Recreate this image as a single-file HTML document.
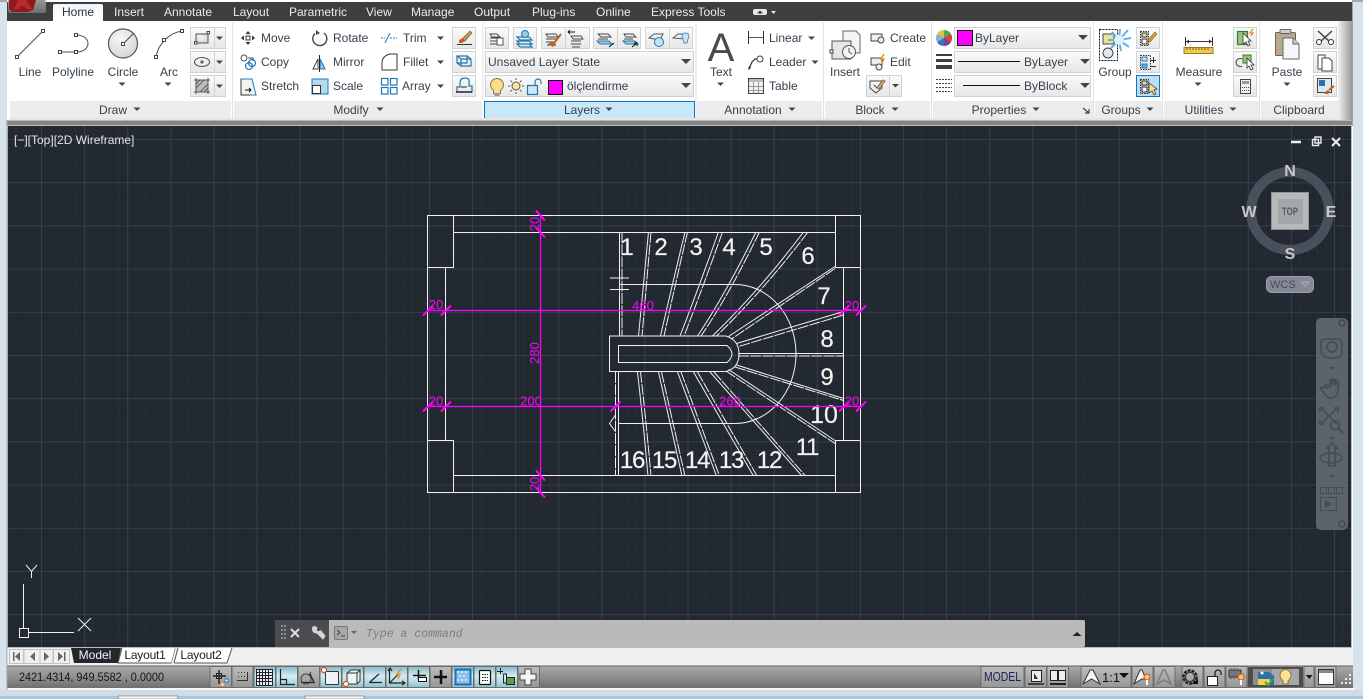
<!DOCTYPE html>
<html><head><meta charset="utf-8"><title>AutoCAD</title>
<style>
html,body{margin:0;padding:0;width:1363px;height:699px;overflow:hidden;background:#d6e2ec}
svg{display:block;font-family:"Liberation Sans",sans-serif;font-size:12px}
.t{fill:#36414d}
.c{fill:#36414d;text-anchor:middle}
.tab{fill:#ececec}
.m{fill:#ff00ff;font-size:13px;text-anchor:middle}
.n{fill:#f2f2f2;font-size:24px;text-anchor:middle;stroke:#f2f2f2;stroke-width:.2}
.n2{letter-spacing:-1.200px}
.ic{fill:none;stroke:#4a4f55;stroke-width:1}
.bl{fill:none;stroke:#1f78b4;stroke-width:1.2}
.sq{fill:#fff;stroke:#444;stroke-width:1}
.w{fill:none;stroke:#f0f0f0;stroke-width:1}
.d{fill:none;stroke:#f0f0f0;stroke-width:1;stroke-dasharray:11 1.2}
.tk{stroke:#ff00ff;stroke-width:2}
.nv{fill:none;stroke:#454b52;stroke-width:1.5}
.s{fill:none;stroke:#222;stroke-width:1.2}
</style></head><body>
<svg width="1363" height="699" viewBox="0 0 1363 699" xmlns="http://www.w3.org/2000/svg">
<defs>
<linearGradient id="gb" x1="0" y1="0" x2="0" y2="1"><stop offset="0" stop-color="#fbfbfb"/><stop offset="1" stop-color="#e6e6e6"/></linearGradient>
<linearGradient id="gh" x1="0" y1="0" x2="0" y2="1"><stop offset="0" stop-color="#f2f6f8"/><stop offset="1" stop-color="#ffffff"/></linearGradient>
<linearGradient id="gs" x1="0" y1="0" x2="0" y2="1"><stop offset="0" stop-color="#a9a9a9"/><stop offset=".5" stop-color="#8f8f8f"/><stop offset="1" stop-color="#6f6f6f"/></linearGradient>
<linearGradient id="gg" x1="0" y1="0" x2="0" y2="1"><stop offset="0" stop-color="#bdbdbd"/><stop offset="1" stop-color="#969696"/></linearGradient>
<linearGradient id="gt" x1="0" y1="0" x2="0" y2="1"><stop offset="0" stop-color="#82b9ca"/><stop offset=".45" stop-color="#d5ebf1"/><stop offset=".75" stop-color="#b2d8e3"/><stop offset="1" stop-color="#8ac1d0"/></linearGradient>
<linearGradient id="gr" x1="0" y1="0" x2="1" y2="0"><stop offset="0" stop-color="#f0f0f0"/><stop offset="1" stop-color="#9a9a9a"/></linearGradient>
<linearGradient id="gd" x1="0" y1="0" x2="0" y2="1"><stop offset="0" stop-color="#9a9a9a"/><stop offset="1" stop-color="#6c6c6c"/></linearGradient>
<radialGradient id="gc" cx=".4" cy=".35" r=".8"><stop offset="0" stop-color="#f7f7f7"/><stop offset="1" stop-color="#cfcfcf"/></radialGradient>
<pattern id="minor" x="41" y="139" width="8.62" height="8.64" patternUnits="userSpaceOnUse"><rect width="1" height="8.64" fill="#262d36"/><rect width="8.62" height="1" fill="#262d36"/></pattern>
<pattern id="major" x="41" y="139" width="43.1" height="43.2" patternUnits="userSpaceOnUse"><rect width="1" height="43.2" fill="#363d4b"/><rect width="43.1" height="1" fill="#363d4b"/></pattern>
<path id="ar" d="M-3.5-1.5h7l-3.5 3.5z" fill="#3f4650"/>
<path id="ard" d="M-5-2h10l-5 5z" fill="#3f4650"/>
</defs>

<!-- frame -->
<rect width="1363" height="699" fill="#d6e2ec"/>
<rect x="0" y="0" width="1363" height="2" fill="#a8a8a8"/>
<rect x="7" y="0" width="1346" height="690" fill="#fff"/>
<rect x="7" y="2" width="1345" height="19" fill="#3e3e3e"/>

<!-- app button -->
<rect x="8" y="0" width="38" height="13" rx="2" fill="url(#gd)"/>
<path d="M9 0h27l-3 10-6 2H12l-3-3z" fill="#8e1a1c"/>
<path d="M18 0l-4 9h5l1-3h4l3 3h5L26 0z" fill="#b82a2e"/>

<!-- tabs -->
<path d="M53 21V6q0-2 2-2h46q2 0 2 2v15z" fill="url(#gh)"/>
<text x="62" y="16" fill="#2b3540">Home</text>
<g class="tab">
<text x="114" y="16">Insert</text><text x="164" y="16">Annotate</text><text x="233" y="16">Layout</text>
<text x="289" y="16">Parametric</text><text x="366" y="16">View</text><text x="411" y="16">Manage</text>
<text x="474" y="16">Output</text><text x="532" y="16">Plug-ins</text><text x="596" y="16">Online</text><text x="651" y="16">Express Tools</text>
</g>
<rect x="753" y="9" width="14" height="6" rx="2" fill="#e8e8e8"/><path d="M757 13.500l3-3 3 3z" fill="#333"/>
<path d="M771 11h5l-2.500 3z" fill="#e8e8e8"/>

<!-- ribbon bottom and scroll area -->
<rect x="9" y="21" width="1329" height="99" fill="#fff"/>
<rect x="1338" y="21" width="14" height="99" fill="url(#gr)"/>
<rect x="7" y="120" width="1345" height="6" fill="#858585"/>
<rect x="7" y="120" width="1345" height="1" fill="#b5b5b5"/>

<!-- panel title strips -->
<g fill="#ececec">
<rect x="10" y="101" width="221" height="18"/><rect x="234" y="101" width="248" height="18"/>
<rect x="697" y="101" width="125" height="18"/><rect x="825" y="101" width="105" height="18"/>
<rect x="933" y="101" width="160" height="18"/><rect x="1095" y="101" width="67" height="18"/>
<rect x="1164" y="101" width="95" height="18"/><rect x="1261" y="101" width="77" height="18"/>
</g>
<rect x="484.500" y="101.500" width="210" height="17" fill="#c9e8f7" stroke="#1173c4"/>
<g stroke="#e2e2e2"><path d="M232.500 22v98M483 22v78M696 22v98M823.500 22v98M931.500 22v98M1093.500 22v98M1162.500 22v98M1259.500 22v98"/></g>
<rect x="9" y="118" width="1329" height="2" fill="#e5e5e5"/>

<!-- titles -->
<g class="c">
<text x="113" y="114">Draw</text><text x="351" y="114">Modify</text><text x="582" y="114">Layers</text>
<text x="753" y="114">Annotation</text><text x="870" y="114">Block</text><text x="999" y="114">Properties</text>
<text x="1121" y="114">Groups</text><text x="1204" y="114">Utilities</text><text x="1299" y="114">Clipboard</text>
</g>
<use href="#ar" x="137" y="109"/><use href="#ar" x="380" y="109"/><use href="#ar" x="609" y="109"/><use href="#ar" x="792" y="109"/>
<use href="#ar" x="895" y="109"/><use href="#ar" x="1036" y="109"/><use href="#ar" x="1150" y="109"/><use href="#ar" x="1233" y="109"/>
<path d="M1083 108l6 5M1089 109v4h-4" fill="none" stroke="#444" stroke-width="1.200"/>

<!-- DRAW -->
<g class="ic">
<path d="M17 57L43 31"/><rect class="sq" x="15.500" y="55.500" width="3" height="3"/><rect class="sq" x="41.500" y="29.500" width="3" height="3"/>
<path d="M60 52H76M76 35C92 35 92 52 76 52"/><rect class="sq" x="58.500" y="50.500" width="3" height="3"/><rect class="sq" x="74.500" y="50.500" width="3" height="3"/><rect class="sq" x="74.500" y="33.500" width="3" height="3"/>
<circle cx="123" cy="43.500" r="14.500" fill="url(#gc)" stroke="#555" stroke-width="1.200"/><path d="M123 44L134 33"/><rect class="sq" x="121.500" y="42.500" width="3" height="3"/>
<path d="M156 57C158 45 168 33 182 31"/><rect class="sq" x="154.500" y="55.500" width="3" height="3"/><rect class="sq" x="162.500" y="38.500" width="3" height="3"/><rect class="sq" x="180.500" y="29.500" width="3" height="3"/>
</g>
<g class="c"><text x="30" y="76">Line</text><text x="73" y="76">Polyline</text><text x="123" y="76">Circle</text><text x="169" y="76">Arc</text></g>
<use href="#ar" x="122" y="84"/><use href="#ar" x="168" y="84"/>
<g fill="url(#gb)" stroke="#d2d2d2">
<rect x="190.500" y="27.500" width="35" height="21"/><rect x="190.500" y="51.500" width="35" height="21"/><rect x="190.500" y="75.500" width="35" height="21"/>
<path d="M214.500 28v21M214.500 52v21M214.500 76v21" fill="none"/>
</g>
<use href="#ar" x="219.500" y="38"/><use href="#ar" x="219.500" y="62"/><use href="#ar" x="219.500" y="86"/>
<path d="M196 34h12v9h-12z" fill="url(#gc)" stroke="#555"/><rect class="sq" x="194.500" y="41.500" width="2.500" height="2.500"/><rect class="sq" x="207" y="31.500" width="2.500" height="2.500"/>
<ellipse cx="202" cy="62" rx="7.500" ry="4.500" class="ic"/><path d="M200 62h4M202 60v4" stroke="#444"/><path d="M194 62h1M209 62h1" stroke="#444"/>
<rect x="196" y="80" width="12" height="12" fill="#bbb" stroke="#555"/><path d="M196 88l8-8M196 84l4-4M200 92l8-8M204 92l4-4" stroke="#666"/><path d="M194 80h16M196 78v16M194 92h16M208 78v16" stroke="#555" fill="none"/>

<!-- MODIFY -->
<g class="t"><text x="261" y="42">Move</text><text x="261" y="66">Copy</text><text x="261" y="90">Stretch</text>
<text x="333" y="42">Rotate</text><text x="333" y="66">Mirror</text><text x="333" y="90">Scale</text>
<text x="403" y="42">Trim</text><text x="403" y="66">Fillet</text><text x="402" y="90">Array</text></g>
<use href="#ar" x="440.500" y="38"/><use href="#ar" x="440.500" y="62"/><use href="#ar" x="440.500" y="86"/>
<path d="M248 31l-2.500 3h5zM248 45l-2.500-3h5zM241 38l3-2.500v5zM255 38l-3-2.500v5z" fill="#333"/><rect x="246" y="36" width="4" height="4" fill="#fff" stroke="#333"/>
<path d="M324 33a7 7 0 1 1-9 .5" fill="none" stroke="#444" stroke-width="1.400"/><path d="M316 30l4 3-4 2z" fill="#444"/>
<circle cx="244" cy="58" r="3" class="ic"/><path d="M248 58h5v3" class="ic"/><circle cx="249" cy="66" r="3.500" class="bl"/><circle cx="252" cy="63" r="3.500" class="bl"/>
<path d="M313 69l5-10v10zM325 69l-5-10v10z" fill="none" stroke="#444"/><path d="M325 69l-5-10v10z" fill="#9fc6e2" stroke="#1f78b4"/><path d="M319.500 55v17" stroke="#222"/>
<path d="M241 79h11l4 16h-15z" fill="#f3f3f3" stroke="#1f78b4"/><path d="M241 79v16h9" fill="none" stroke="#333"/><path d="M245 90h6m-2-2l2 2-2 2" fill="none" stroke="#111"/>
<rect x="312" y="79" width="16" height="15" fill="#b7d9f0" stroke="#1f78b4"/><rect x="312.500" y="85.500" width="8" height="8" fill="#fff" stroke="#333"/>
<path d="M381 38h4M390 38h7" stroke="#1f78b4" stroke-dasharray="2 1"/><path d="M385 43l5-10" stroke="#1f78b4"/>
<path d="M382 70h15V54h-7q-8 2-8 9z" fill="none" stroke="#333"/>
<g class="bl"><rect x="381.500" y="78.500" width="6.500" height="6.500"/><rect x="390.500" y="78.500" width="6.500" height="6.500"/><rect x="381.500" y="87.500" width="6.500" height="6.500"/><rect x="390.500" y="87.500" width="6.500" height="6.500"/></g>
<g fill="url(#gb)" stroke="#d2d2d2"><rect x="452.500" y="27.500" width="23" height="21"/><rect x="452.500" y="51.500" width="23" height="21"/><rect x="452.500" y="75.500" width="23" height="21"/></g>
<path d="M457 44.500h15" stroke="#333"/><path d="M470 31l2 2-7 8-3-2z" fill="#b99a5e" stroke="#7d6a3e" stroke-width=".7"/><path d="M459 40l4-2 2 3-3 2h-3z" fill="#d9531e"/>
<path d="M457 56h10l4 3v7h-10l-4-3z" class="bl"/><path d="M461 59h10M461 59v7M457 56l4 3M467 56v7h-10" class="bl" stroke-width=".8"/>
<path d="M457 92v-5h3v-4q0-5 5-5t4 5v3h3v6z" fill="none" stroke="#1f78b4" stroke-width="1.200"/><path d="M456 92h16" stroke="#222" stroke-width="1.400"/><path d="M461 87h6" stroke="#222"/>

<!-- LAYERS -->
<g fill="url(#gb)" stroke="#d2d2d2">
<rect x="485.500" y="27.500" width="23" height="21"/><rect x="513.500" y="27.500" width="23" height="21"/>
<rect x="541.500" y="27.500" width="48" height="21"/><rect x="593.500" y="27.500" width="47" height="21"/><rect x="645.500" y="27.500" width="47" height="21"/>
<path d="M565.500 28v21M617.500 28v21M669.500 28v21" fill="none"/>
<rect x="485.500" y="51.500" width="208" height="21"/><rect x="485.500" y="75.500" width="208" height="21"/>
</g>
<g fill="none" stroke="#444" stroke-width=".9">
<path d="M490 34h7l3 3h-8zM490 38h10M490 41h10M490 44h7"/><rect x="497" y="38" width="6" height="7" fill="#fff"/>
<path d="M546 34h10l2 3h-10zM546 39h10M546 42h10M547 45h9"/>
<path d="M571 36h10l2 3h-10zM571 41h10M571 44h10M572 47h8"/><path d="M570 30l-2 2 2 2M568 32h7" stroke="#111"/>
<path d="M598 34h10l3 3h-10zM598 39h10"/><path d="M624 34h9l3 3h-10zM624 39h9"/>
</g>
<path d="M517 37h12l3 3h-12zM517 41h12l3 3h-12zM517 44h12l3 3h-12z" class="bl"/><circle cx="525" cy="34" r="3.500" fill="#9fc6e2" stroke="#1f78b4"/>
<path d="M548 44l5-3 3 3-3 3z" fill="#b5661e"/><path d="M555 42l6-8" stroke="#b5661e" stroke-width="2"/>
<path d="M597 41h12l3 3h-12z" fill="#9fc6e2" stroke="#1f78b4"/><path d="M609 47l5-4" stroke="#111"/><path d="M623 41h12l3 3h-12z" fill="#9fc6e2" stroke="#1f78b4"/><path d="M632 47l5-4m-3 0h3v3" fill="none" stroke="#111"/>
<path d="M649 38l5-4h9l-3 6z" fill="none" stroke="#555"/><circle cx="659" cy="42" r="4.500" fill="#c7e0f2" stroke="#1f78b4"/>
<path d="M673 38l5-4h10l-3 5z" fill="none" stroke="#555"/><path d="M683 39a3.500 3.500 0 1 1 5 0l-1 4h-3z" fill="#cfe4f4" stroke="#5b8db0"/>
<text x="488" y="66" class="t">Unsaved Layer State</text>
<use href="#ard" x="686" y="61"/><use href="#ard" x="686" y="85"/>
<path d="M493.500 90.500q-3-3-3-5.500a6.500 6.500 0 0 1 13 0q0 2.500-3 5.500v3h-7z" fill="#f8df88" stroke="#8a7a3a"/><rect x="494.500" y="93" width="5" height="3" fill="#999"/>
<circle cx="516" cy="86" r="4" fill="#f6e59a" stroke="#555"/><path d="M510 86h-2M524 86h-2M516 80v-2M516 94v-2M512 82l-1.500-1.500M521.500 91.500L520 90M520 82l1.500-1.500M510.500 91.500L512 90" stroke="#555"/>
<rect x="527.500" y="85.500" width="10" height="9" fill="#cfe6f6" stroke="#1f78b4" stroke-width="1.200"/><path d="M535 85v-3a3 3 0 0 1 6 0v2" fill="none" stroke="#1f78b4" stroke-width="1.200"/>
<rect x="548.500" y="80.500" width="14" height="14" fill="#ff00ff" stroke="#111"/>
<text x="567" y="90" class="t">ölçlendirme</text>

<!-- ANNOTATION -->
<text x="721" y="61" text-anchor="middle" style="font-size:40px" fill="#474b50">A</text>
<text x="721" y="76" class="c">Text</text><use href="#ar" x="720.500" y="84"/>
<g class="t"><text x="769" y="42">Linear</text><text x="769" y="66">Leader</text><text x="769" y="90">Table</text></g>
<use href="#ar" x="811.500" y="38"/><use href="#ar" x="815" y="62"/>
<path d="M748.500 31v13M763.500 31v13" stroke="#333"/><path d="M749 37.500h14" stroke="#555"/>
<path d="M749 69l3-7 3-3h4" fill="none" stroke="#333" stroke-width="1.200"/><circle cx="760" cy="59" r="3" fill="#fff" stroke="#444"/><path d="M748 70l1-4 2 2z" fill="#222"/>
<rect x="748.500" y="78.500" width="15" height="15" fill="#f3f3f3" stroke="#444"/><rect x="749" y="79" width="14" height="3" fill="#bbb"/><path d="M749 86.500h14M749 90.500h14M753.500 82v11M758.500 82v11" stroke="#999"/>

<!-- BLOCK -->
<path d="M843 31h13l4 4v18h-17z" fill="#f5f5f5" stroke="#666"/>
<path d="M832 41h19v18h-19z" fill="#e6e6e6" stroke="#555"/>
<circle cx="849" cy="52" r="6.500" fill="#f4f4f4" stroke="#555"/><path d="M849 48v4l3 2" fill="none" stroke="#555"/>
<rect class="sq" x="830" y="50" width="3" height="3"/>
<text x="845" y="76" class="c">Insert</text>
<g class="t"><text x="890" y="42">Create</text><text x="890" y="66">Edit</text></g>
<rect x="871" y="34" width="11" height="7" fill="#eee" stroke="#444"/><circle cx="881" cy="40" r="3" fill="#eee" stroke="#444"/>
<rect x="871" y="58" width="11" height="7" fill="#eee" stroke="#444"/><circle cx="879" cy="67" r="3" fill="#eee" stroke="#444"/><path d="M884 54l-3 5h3l-2 4" fill="none" stroke="#e8931e" stroke-width="1.400"/>
<g fill="url(#gb)" stroke="#d2d2d2"><rect x="866.500" y="75.500" width="35" height="21"/><path d="M889.500 76v21" fill="none"/></g>
<use href="#ar" x="895.500" y="85.500"/>
<path d="M870 81h12v7l-6 5-6-5z" fill="none" stroke="#444"/><path d="M874 85l3 3 5-7" stroke="#444" fill="none"/><path d="M877 88l6-8 2 1-6 8z" fill="#f0c040" stroke="#866"/>

<!-- PROPERTIES -->
<circle cx="944" cy="38" r="7.500" fill="#999"/><path d="M944 38L937 34a8 8 0 0 1 7-4z" fill="#e3c53c"/><path d="M944 38V30a8 8 0 0 1 7 4z" fill="#53a84c"/><path d="M944 38l7-4a8 8 0 0 1 0 8z" fill="#d6433a"/><path d="M944 38l7 4a8 8 0 0 1-7 4z" fill="#7b3f9d"/><path d="M944 38v8a8 8 0 0 1-7-4z" fill="#3f6fc0"/><path d="M944 38l-7 4a8 8 0 0 1 0-8z" fill="#7fb8dd"/>
<g fill="#3d4046"><rect x="936" y="54" width="16" height="2"/><rect x="936" y="59" width="16" height="3"/><rect x="936" y="65" width="16" height="4"/></g>
<g stroke="#444" stroke-dasharray="2 1"><path d="M936 79.500h16M936 83.500h16M936 87.500h16M936 91.500h16"/></g>
<g fill="url(#gb)" stroke="#d2d2d2"><rect x="954.500" y="27.500" width="136" height="21"/><rect x="954.500" y="51.500" width="136" height="21"/><rect x="954.500" y="75.500" width="136" height="21"/></g>
<rect x="957.500" y="30.500" width="15" height="15" fill="#ff00ff" stroke="#111"/>
<g class="t"><text x="975" y="42">ByLayer</text><text x="1024" y="66">ByLayer</text><text x="1024" y="90">ByBlock</text></g>
<path d="M958 61.500h62M963 85.500h57" stroke="#111"/>
<use href="#ard" x="1083" y="37"/><use href="#ard" x="1085" y="61"/><use href="#ard" x="1085" y="85"/>

<!-- GROUPS -->
<rect x="1099.500" y="29.500" width="18" height="31" fill="none" stroke="#111" stroke-dasharray="2 1"/>
<rect x="1103" y="34" width="11" height="10" fill="#e8e49a" stroke="#444"/><circle cx="1108" cy="53" r="5" fill="#dfe8ee" stroke="#444"/>
<path d="M1119 40L1131 38M1119 40L1128 30M1119 40L1120 29M1119 40L1112 32M1119 40L1108 40M1119 40L1111 48M1119 40L1121 51M1119 40L1129 47" stroke="#5fb2ea" stroke-width="2"/><circle cx="1119" cy="40" r="5" fill="#dff1fc"/>
<text x="1115" y="76" class="c">Group</text>
<g fill="url(#gb)" stroke="#d2d2d2"><rect x="1136.500" y="27.500" width="23" height="21"/><rect x="1136.500" y="51.500" width="23" height="21"/></g>
<rect x="1136.500" y="75.500" width="23" height="21" fill="#bcdcf4" stroke="#1173c4"/>
<g fill="none" stroke="#333" stroke-dasharray="1.500 1"><rect x="1140.500" y="31.500" width="8" height="14"/><rect x="1140.500" y="55.500" width="10" height="14"/><rect x="1140.500" y="79.500" width="8" height="14"/></g>
<rect x="1142" y="33" width="5" height="4" fill="#e8e49a" stroke="#333"/><rect x="1142" y="39" width="5" height="5" fill="#fff" stroke="#333"/>
<path d="M1148 40l7-8 2 2-7 8z" fill="#e39a3c" stroke="#7d6a3e" stroke-width=".6"/>
<rect x="1142" y="57" width="5" height="4" fill="#cfe4f4" stroke="#1f78b4"/><rect x="1142" y="64" width="5" height="4" fill="#6fa8d8" stroke="#1f78b4"/><path d="M1150 60.500h6M1153.500 57v6M1150 66.500h6" stroke="#333"/>
<rect x="1142" y="81" width="5" height="4" fill="#e8e49a" stroke="#333"/><rect x="1142" y="87" width="5" height="5" fill="#fff" stroke="#333"/><path d="M1149 83l8 6-3 1 2 4-2 1-2-4-3 2z" fill="#f3e48a" stroke="#333" stroke-width=".7"/>

<!-- UTILITIES -->
<path d="M1185.500 37v9M1212.500 37v9" stroke="#333"/><path d="M1186 41.500h26" stroke="#333"/><path d="M1186 41.500l3-2v4zM1212 41.500l-3-2v4z" fill="#333"/>
<rect x="1184" y="47.500" width="29" height="6" fill="#eec84f" stroke="#9c7a1e"/><path d="M1187 48v2M1190 48v2M1193 48v2M1196 48v2M1199 48v2M1202 48v2M1205 48v2M1208 48v2" stroke="#7d6015"/>
<text x="1199" y="76" class="c">Measure</text><use href="#ar" x="1198" y="84"/>
<g fill="url(#gb)" stroke="#d2d2d2"><rect x="1233.500" y="27.500" width="23" height="21"/><rect x="1233.500" y="51.500" width="23" height="21"/><rect x="1233.500" y="75.500" width="23" height="21"/></g>
<rect x="1237.500" y="31.500" width="10" height="13" fill="#9bc27e" stroke="#2e7d32" stroke-width="1.200"/><path d="M1243 33l8 8-3 0 2 4-2 1-2-4-3 2z" fill="#fff" stroke="#333" stroke-width=".8"/><path d="M1253 29l-3 4h3l-2 3" fill="none" stroke="#e8931e" stroke-width="1.300"/>
<rect x="1243" y="55" width="8" height="8" fill="#9bc27e" stroke="#2e7d32"/><path d="M1242 59a4 4 0 1 0 0 7" fill="none" stroke="#444"/><path d="M1247 58l7 7-3 0 2 4-2 1-2-4-2 2z" fill="#fff" stroke="#333" stroke-width=".8"/>
<rect x="1240.500" y="79.500" width="10" height="14" fill="#f2f2f2" stroke="#444"/><rect x="1242" y="81" width="7" height="3" fill="#999"/><path d="M1242 87.500h7M1242 90.500h7" stroke="#444" stroke-dasharray="1 1"/>

<!-- CLIPBOARD -->
<rect x="1275.500" y="32.500" width="20" height="23" rx="1" fill="#b8a98c" stroke="#6f6552"/>
<rect x="1280" y="29.500" width="11" height="4" rx="1" fill="#ccc" stroke="#666"/>
<path d="M1283 38h10l6 6v15h-16z" fill="#f5f6f8" stroke="#666"/><path d="M1293 38v6h6" fill="#ccc" stroke="#666"/>
<text x="1287" y="76" class="c">Paste</text><use href="#ar" x="1287" y="84"/>
<g fill="url(#gb)" stroke="#d2d2d2"><rect x="1313.500" y="27.500" width="23" height="21"/><rect x="1313.500" y="51.500" width="23" height="21"/><rect x="1313.500" y="75.500" width="23" height="21"/></g>
<path d="M1318 31l12 11M1332 31l-12 11" stroke="#444" stroke-width="1.500"/><circle cx="1319" cy="42" r="2.500" fill="#fff" stroke="#333"/><circle cx="1331" cy="42" r="2.500" fill="#fff" stroke="#333"/>
<path d="M1318 55h7v14h-7z" fill="#fff" stroke="#444"/><path d="M1322 58h7l3 3v10h-10z" fill="#fff" stroke="#444"/>
<rect x="1317.500" y="78.500" width="14" height="14" fill="#dde7ef" stroke="#444"/><rect x="1319" y="80" width="6" height="6" fill="#2f6ea8"/><path d="M1325 92l3-2 2 2-2 2h-3z" fill="#b5661e"/><path d="M1329 90l5-4" stroke="#b5661e" stroke-width="2"/>

<!-- VIEWPORT -->
<rect x="8" y="126" width="1343" height="521" fill="#212830"/>
<rect x="8" y="126" width="1343" height="521" fill="url(#minor)"/>
<rect x="8" y="126" width="1343" height="521" fill="url(#major)"/>
<rect x="7.500" y="125.500" width="1344" height="522" fill="none" stroke="#bdbdbd"/>
<text x="14" y="144" fill="#e4e4e4">[−][Top][2D Wireframe]</text>
<path d="M1291 142h10" stroke="#eee" stroke-width="2.500"/>
<rect x="1312.500" y="139.500" width="6" height="6" fill="none" stroke="#eee" stroke-width="1.400"/><rect x="1315" y="137" width="6" height="6" fill="none" stroke="#eee" stroke-width="1.400"/>
<path d="M1332 138l8 8M1340 138l-8 8" stroke="#eee" stroke-width="2"/>

<!-- DRAWING -->
<g class="w">
<rect x="427.500" y="215.500" width="433" height="277"/>
<path d="M453.500 215.500V267.500H427.500M835.500 215.500V267.500H860.500M453.500 232.500H835.500M445.500 267.500V440.500M843.500 267.500V440.500"/>
<path d="M427.500 440.500H453.500V492.500M860.500 440.500H835.500V492.500M453.500 475.500H835.500"/>
<path d="M609.500 336H726Q739 340 739 354Q739 368 726 371.500H609.500Z"/>
<path d="M618.500 345.500H727Q732 350 732 354Q732 358 727 362.500H618.500Z"/>
<path d="M619.500 232V336M618.500 372V475"/>
<path d="M619 284.500H735A61 69.500 0 0 1 735 423.500H618.500"/>
<path d="M610 278H629M610 289.500H629"/>
<path d="M615.500 415L609.500 423.500L615.500 431.500"/>
<!-- upper risers -->
<path d="M648.500 232Q643 290 638.500 336M685 232Q671 290 660.500 336M718.500 232Q696 295 680 336M756 232Q725 295 697.500 336M803.500 232Q760 290 712.500 336"/>
<path d="M835 266.500L728.500 336.500M843.500 311.500L736.500 343.500M738 353.500H843.500"/>
<path d="M736.500 365L843.500 398.500M728.500 369.500L835 440.500M710 372L802 476M693.500 372L753.500 476M677.500 372L716.500 476M658.500 372L682 476M637.500 372Q643 420 648 476"/>
</g>
<g class="d">
<path d="M622 232V336M615.500 372V475"/>
<path d="M651 232Q646 290 642 336M687.500 232Q674 290 664 336M722.500 232Q700 295 684 336M759.500 232Q729 295 701 336M808 232Q764 290 716.500 336"/>
<path d="M835 268.500L731.500 339M843.500 315L738.500 346.500M738 356H843.500"/>
<path d="M735 367L843.500 400.500M726 371L835 443.500M714 372L805.500 476M697.500 372L757 476M681 372L719.500 476M661.500 372L685 476M640.500 372Q646 420 651 476"/>
</g>
<g class="n">
<text x="627" y="255">1</text><text x="661" y="255">2</text><text x="696" y="255">3</text><text x="729" y="255">4</text><text x="766" y="255">5</text>
<text x="808" y="264">6</text><text x="824" y="304">7</text><text x="827" y="347">8</text><text x="827" y="385">9</text>
<text x="824" y="423" style="font-size:25px">10</text><text x="807" y="455" class="n2">11</text>
<text x="769" y="468" class="n2">12</text><text x="731" y="468" class="n2">13</text><text x="697" y="468" class="n2">14</text><text x="664" y="468" class="n2">15</text><text x="632" y="468" class="n2">16</text>
</g>
<!-- dimensions -->
<g stroke="#ff00ff" stroke-width="1.200"><path d="M427 310.500H861M427 406.500H861M540.500 215V492"/></g>
<g class="tk">
<path d="M423 315.500l10-10M441 315.500l10-10M839 315.500l10-10M856 315.500l10-10"/>
<path d="M423 411.500l10-10M441 411.500l10-10M610.500 411.500l10-10M839 411.500l10-10M856 411.500l10-10"/>
<path d="M536 210.500l9 10M536 227.500l9 10M536 470.500l9 10M536 487.500l9 10"/>
</g>
<g class="m">
<text x="436" y="309">20</text><text x="643" y="310">460</text><text x="852" y="310">20</text>
<text x="436" y="405.500">20</text><text x="531" y="405.500">200</text><text x="730" y="405.500">260</text><text x="852" y="405.500">20</text>
<text transform="translate(539 224) rotate(-90)">20</text>
<text transform="translate(539 353) rotate(-90)">280</text>
<text transform="translate(539 484) rotate(-90)">20</text>
</g>

<!-- UCS -->
<g fill="none" stroke="#f0f0f0">
<path d="M23.500 584V628M28 632.500H74"/><rect x="19.500" y="628.500" width="9" height="9"/>
<path d="M26 565l5.500 6.500L37 565M31.500 571.500V578M78 618l13 13M91 618l-13 13"/>
</g>

<!-- ViewCube -->
<circle cx="1290" cy="211" r="39" fill="none" stroke="#4a505b" stroke-width="10"/>
<rect x="1271.500" y="192.500" width="37" height="37" fill="#b6b8ba" stroke="#8e9195"/>
<rect x="1278" y="199" width="25" height="25" fill="#a3a6ab"/>
<text x="1282" y="215" style="font-size:11px;font-weight:bold" fill="#565c67" textLength="16" lengthAdjust="spacingAndGlyphs">TOP</text>
<g style="font-size:16px;font-weight:bold" fill="#c8c9c9" text-anchor="middle">
<text x="1290" y="176">N</text><text x="1290" y="259">S</text><text x="1249" y="217">W</text><text x="1331" y="217">E</text>
</g>
<rect x="1266.500" y="276.500" width="47" height="16" rx="5" fill="#858897" stroke="#9a9dab"/>
<text x="1270" y="288" style="font-size:11px" fill="#474c59">WCS</text>
<path d="M1301 282h8l-4 4z" fill="none" stroke="#a9acb8"/>

<!-- Nav bar -->
<rect x="1316" y="318" width="32" height="212" rx="5" fill="#5c6369"/>
<circle cx="1342" cy="323" r="3" class="nv" stroke-width="1"/>
<circle cx="1342" cy="524" r="3" class="nv" stroke-width="1"/>
<g class="nv">
<path d="M1326 339h12q4 0 4 4v9q0 6-10 6t-11-7v-8q0-4 5-4z"/><circle cx="1332" cy="347" r="5"/>
<path d="M1327 388l-2-3 1-1 4 3v-7h2v5v-6h2v6v-5h2v6l1-4h2l-1 9q-1 7-8 7-3 0-5-4l-5-6 1-1z"/>
<path d="M1321 408l16 16M1337 408l-16 16M1320 412v-4h4M1338 412v-4h-4M1320 420v4h4"/><circle cx="1335" cy="425" r="4.500"/><path d="M1338 428l5 5" stroke-width="2"/>
<path d="M1329 466v-18l-3 1 6-6 6 6-3-1v18z"/><ellipse cx="1331" cy="458" rx="11" ry="5"/>
<rect x="1320.500" y="487.500" width="6" height="6" stroke-width="1"/><rect x="1328.500" y="487.500" width="6" height="6" stroke-width="1"/><rect x="1336.500" y="487.500" width="6" height="6" stroke-width="1"/>
<rect x="1320.500" y="497.500" width="16" height="13" stroke-width="1"/>
</g>
<path d="M1325 500l7 4-7 4z" fill="#454b52"/>
<path d="M1329 367h6l-3 3zM1329 437h6l-3 3zM1329 475h6l-3 3z" fill="#454b52"/>

<!-- COMMAND -->
<rect x="275" y="620" width="810" height="27" rx="2" fill="#bababa"/>
<path d="M277 620h52v27h-54v-25q0-2 2-2z" fill="#4a4c50"/>
<path d="M281 626h5M281 630h5M281 634h5M281 638h5" stroke="#8b8b8b" stroke-width="2" stroke-dasharray="2 1"/>
<path d="M291 629l8 8M299 629l-8 8" stroke="#e0e0e0" stroke-width="2"/>
<path d="M313 627a3.500 3.500 0 0 1 4 1l-1 2 2 2 2-1q2 0 1 0l4 5-2 3-6-6q-3 0-4-2-1-2 0-4z" fill="#d5d5d5" stroke="#d5d5d5"/>
<rect x="334.500" y="626.500" width="13" height="13" rx="1" fill="#a8a8a8" stroke="#777"/><path d="M337 630l3 2.500-3 2.500M341 636h4" fill="none" stroke="#444"/>
<path d="M351 631h6l-3 3z" fill="#666"/>
<text x="366" y="637" style="font-family:'Liberation Mono',monospace;font-size:11.500px;font-style:italic" fill="#7d7d7d">Type a command</text>
<path d="M1072.500 636l4.500-4 4.500 4z" fill="#222"/>

<!-- LAYOUT TABS -->
<rect x="8" y="648" width="1345" height="18" fill="#f0f0f0"/>
<g fill="#f0f0f0" stroke="#c2c2c2"><rect x="9.500" y="649.500" width="14" height="14"/><rect x="24" y="649.500" width="16" height="14"/><rect x="40" y="649.500" width="13" height="14"/><rect x="53.500" y="649.500" width="16" height="14"/></g>
<g fill="#666"><path d="M13 652h1.500v9H13zM20 652v9l-5-4.500zM35 652v9l-5-4.500zM44 652v9l5-4.500zM58 652v9l5-4.500zM64 652h1.500v9H64z"/></g>
<path d="M71 648H121L118 663H74Z" fill="#22272e"/>
<text x="95" y="659" text-anchor="middle" fill="#f4f4f4">Model</text>
<path d="M118 663L122 648M122 648L118 663H171L175 648" fill="none" stroke="#555"/>
<path d="M118 663L122 648H175L171 663Z" fill="#fff"/>
<path d="M118 663L122 648M118.500 663H171" fill="none" stroke="#555"/>
<path d="M174 663L178 648H232L227 663Z" fill="#fff"/>
<path d="M174 663L178 648M174.500 663H227L232 648" fill="none" stroke="#555"/>
<text x="145" y="659" text-anchor="middle" fill="#222" style="letter-spacing:-.2px">Layout1</text>
<text x="201" y="659" text-anchor="middle" fill="#222" style="letter-spacing:-.2px">Layout2</text>

<!-- STATUS BAR -->
<rect x="7" y="666" width="1346" height="22" fill="url(#gs)"/>
<rect x="7" y="665.500" width="1346" height="1" fill="#5f5f5f"/>
<text x="19" y="681" fill="#161616" style="font-size:12px" textLength="145" lengthAdjust="spacingAndGlyphs">2421.4314, 949.5582 , 0.0000</text>
<g stroke="#6c6c6c">
<rect x="210" y="666.500" width="21.500" height="21" fill="url(#gg)"/><rect x="232" y="666.500" width="21" height="21" fill="url(#gg)"/>
<rect x="254" y="666.500" width="21.500" height="21" fill="url(#gt)"/><rect x="276" y="666.500" width="21.500" height="21" fill="url(#gt)"/>
<rect x="298" y="666.500" width="21.500" height="21" fill="url(#gg)"/><rect x="320" y="666.500" width="21.500" height="21" fill="url(#gt)"/>
<rect x="342" y="666.500" width="21.500" height="21" fill="url(#gt)"/><rect x="364" y="666.500" width="21.500" height="21" fill="url(#gt)"/>
<rect x="386" y="666.500" width="21.500" height="21" fill="url(#gt)"/><rect x="408" y="666.500" width="21.500" height="21" fill="url(#gt)"/>
<rect x="430" y="666.500" width="21.500" height="21" fill="url(#gg)"/><rect x="452" y="666.500" width="21.500" height="21" fill="url(#gt)"/>
<rect x="474" y="666.500" width="21.500" height="21" fill="url(#gt)"/><rect x="496" y="666.500" width="21.500" height="21" fill="url(#gt)"/>
<rect x="518" y="666.500" width="21.500" height="21" fill="url(#gg)"/>
</g>
<path d="M213 676h13M219 670v14" stroke="#222" stroke-width="1.500"/><rect x="216.500" y="673.500" width="5" height="5" fill="none" stroke="#222"/><rect x="225" y="679" width="3" height="3" fill="#fff" stroke="#1f78b4"/><rect x="221" y="683" width="3" height="3" fill="#fff" stroke="#c94"/>
<path d="M237 680.500h11M247.500 672v8M238 672.500h1M241 672.500h1M244 672.500h1M238 676.500h1M241 676.500h1M244 676.500h1" stroke="#333"/>
<rect x="256.500" y="669.500" width="16" height="16" fill="#eef" stroke="#222"/><path d="M256.500 672.500h16M256.500 675.500h16M256.500 678.500h16M256.500 681.500h16M259.500 669.500v16M262.500 669.500v16M265.500 669.500v16M268.500 669.500v16" stroke="#222"/>
<path d="M280.500 669v15.500H295" class="s"/><path d="M280 679.500h6.500v5" class="s" stroke="#555"/>
<path d="M301 682.500h13l-4-9" class="s" stroke="#333"/><circle cx="306" cy="679" r="5" fill="none" stroke="#444"/><path d="M311 672l-2 3" stroke="#444"/>
<rect x="325.500" y="671.500" width="13" height="13" rx="1" fill="#eef3f5" stroke="#333"/><circle cx="324" cy="670" r="2.500" fill="#fff" stroke="#d6521e" stroke-width="1.200"/>
<path d="M347 673l4-3h9v11l-3 3h-10z" fill="#eef3f5" stroke="#333"/><path d="M347 673h10v11M357 673l3-3" fill="none" stroke="#333"/><circle cx="346" cy="684" r="2.500" fill="#fff" stroke="#d6521e" stroke-width="1.200"/>
<path d="M369 682.500h13M370 682l9-8" class="s"/>
<path d="M389.500 669v14h15M389.500 683l8-8" class="s"/><path d="M388 671l2-3 2 3M402 681l3 2-3 2" class="s"/><path d="M401 669l-4 5h3l-2 5" fill="none" stroke="#e8931e" stroke-width="1.500"/>
<path d="M413 675.500h13M418.500 670v10" stroke="#111" stroke-width="1.500"/><rect x="418.500" y="677.500" width="8" height="4" fill="#fff" stroke="#111"/>
<path d="M434 677h13M441 670v14" stroke="#111" stroke-width="2.500"/>
<rect x="455.500" y="669.500" width="15" height="15" fill="#8fbfe6" stroke="#1173c4" stroke-width="2"/>
<path d="M457 671h2v2h-2zM461 671h2v2h-2zM465 671h2v2h-2zM459 675h2v2h-2zM463 675h2v2h-2zM457 679h2v2h-2zM461 679h2v2h-2zM465 679h2v2h-2z" fill="#cfe4f4"/>
<rect x="479.500" y="670.500" width="11" height="14" rx="1" fill="#fff" stroke="#111" stroke-width="1.200"/><path d="M482 674.500h6M482 677.500h6M482 680.500h6" stroke="#111" stroke-dasharray="1.500 1"/>
<path d="M497 671.500h6M500.500 668v6M502.500 674h4v3" stroke="#222" fill="none"/><rect x="506.500" y="677.500" width="8" height="7" fill="#5aa04a" stroke="#222"/><path d="M503.500 675v8h3" stroke="#222" fill="none"/>
<path d="M525 669h6v5h5v6h-5v5h-6v-5h-5v-6h5z" fill="#f4f4f4" stroke="#444"/>
<!-- right status -->
<g stroke="#6c6c6c">
<rect x="981" y="666.500" width="43" height="21" fill="url(#gg)"/><rect x="1025" y="666.500" width="21.500" height="21" fill="url(#gg)"/><rect x="1047" y="666.500" width="21.500" height="21" fill="url(#gg)"/>
<rect x="1081" y="666.500" width="50" height="21" fill="url(#gg)"/><rect x="1132" y="666.500" width="21" height="21" fill="url(#gg)"/><rect x="1154" y="666.500" width="21" height="21" fill="url(#gg)"/>
<rect x="1182" y="666.500" width="21" height="21" fill="url(#gg)"/><rect x="1204" y="666.500" width="21" height="21" fill="url(#gg)"/><rect x="1226" y="666.500" width="21" height="21" fill="url(#gg)"/>
<rect x="1304" y="666.500" width="10" height="21" fill="url(#gg)"/><rect x="1315" y="666.500" width="21" height="21" fill="url(#gg)"/>
</g>
<rect x="1248" y="667" width="55" height="20" fill="#4d4d4d"/><rect x="1253" y="669" width="46" height="16" fill="#8f8f8f"/><rect x="1272" y="669" width="27" height="16" fill="#a8a8a8"/>
<text x="984" y="681" fill="#18225a" style="font-size:12.500px" textLength="37" lengthAdjust="spacingAndGlyphs">MODEL</text>
<rect x="1031.500" y="670.500" width="10" height="11" fill="#eee" stroke="#222"/><path d="M1034 679v-6l4 6z" fill="#333"/><path d="M1028 684h16" stroke="#222" stroke-width="1.500"/>
<rect x="1050.500" y="670.500" width="7" height="10" fill="#eee" stroke="#222"/><rect x="1058.500" y="670.500" width="7" height="10" fill="#eee" stroke="#222"/><path d="M1050 684h16" stroke="#222" stroke-width="2"/>
<path d="M1083 684l7-14 3 0 7 14-8.500-5z" fill="#f4f4f4" stroke="#333"/>
<text x="1102" y="682" style="font-size:13px" fill="#111">1:1</text>
<path d="M1119 673h10l-5 5z" fill="#111"/>
<path d="M1134 684l6-14 2 0 4 9-4 0-2 1z" fill="#f4f4f4" stroke="#333"/><circle cx="1147" cy="677" r="3" fill="#f6c85c" stroke="#d6521e"/><rect x="1146" y="680" width="2" height="5" fill="#fff"/>
<path d="M1157 684l6-14 2 0 6 14-7-4z" fill="none" stroke="#7c7c7c" stroke-width="1.500"/>
<circle cx="1190" cy="677" r="6.500" fill="none" stroke="#222" stroke-width="2.500" stroke-dasharray="3 1"/><circle cx="1190" cy="677" r="4.500" fill="none" stroke="#222"/><path d="M1192 684h6v-5z" fill="#111"/>
<rect x="1207.500" y="676.500" width="10" height="9" fill="#fff" stroke="#222"/><path d="M1215 676v-3a3 3 0 0 1 6 0v2" fill="none" stroke="#222" stroke-width="1.300"/>
<rect x="1229" y="670" width="12" height="7" fill="#777" stroke="#333"/><path d="M1231 669v-1M1234 669v-1M1237 669v-1M1231 678v1M1234 678v1" stroke="#333"/><circle cx="1241" cy="677" r="3" fill="#f6c85c" stroke="#d6521e"/><rect x="1240" y="680" width="2" height="5" fill="#fff"/>
<path d="M1258 672h11l5 4v9h-16z" fill="#2f6ea8"/><rect x="1258" y="679" width="12" height="6" fill="#f0d24c"/><circle cx="1262" cy="673" r="1.500" fill="#fff"/><path d="M1265 682l3 3 5-6" fill="none" stroke="#3fa83c" stroke-width="2"/>
<path d="M1283 681q-3-3-3-6a5.500 5.500 0 0 1 11 0q0 3-3 6v3h-5z" fill="#f8e29a" stroke="#8a7a3a"/>
<path d="M1306 675h6.500l-3.250 4z" fill="#111"/>
<rect x="1318.500" y="669.500" width="15" height="15" fill="#fff" stroke="#333"/><rect x="1319" y="670" width="14" height="3" fill="#888"/>
<g fill="#eee"><rect x="1349" y="674" width="2" height="2"/><rect x="1345" y="678" width="2" height="2"/><rect x="1349" y="678" width="2" height="2"/><rect x="1341" y="682" width="2" height="2"/><rect x="1345" y="682" width="2" height="2"/><rect x="1349" y="682" width="2" height="2"/></g>

<!-- lower frame / taskbar -->
<rect x="7" y="688" width="1348" height="6" fill="#f4f6f8"/>
<rect x="0" y="690" width="1363" height="9" fill="#cfdbe6"/>
<rect x="0" y="696" width="1363" height="3" fill="#a9c6dd"/>
<rect x="118" y="696" width="60" height="3" fill="#f4f6f8" stroke="#555" stroke-width=".5"/>
<rect x="305" y="696" width="59" height="3" fill="#f4f6f8" stroke="#555" stroke-width=".5"/>
<path d="M7 120V690M1352.500 0V126" stroke="#9aa4ac" stroke-width="1"/>
</svg>
</body></html>
